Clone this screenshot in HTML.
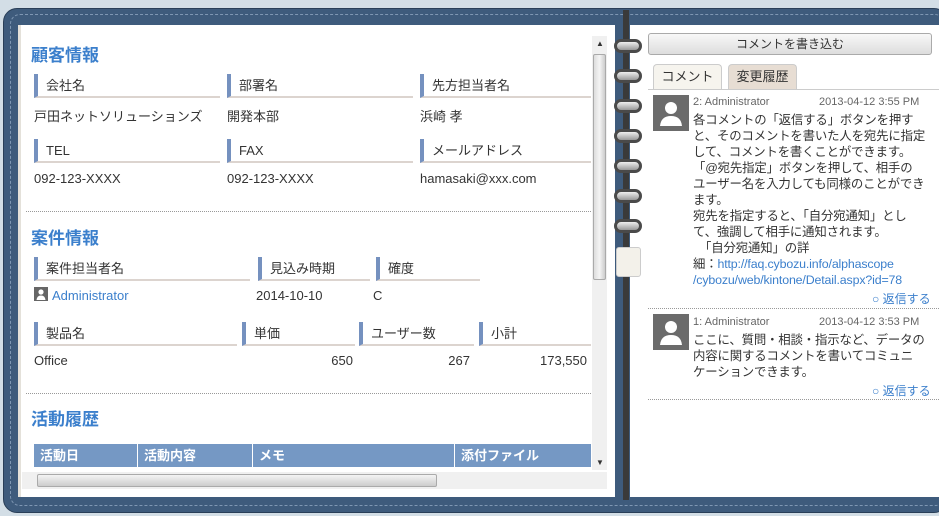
<!DOCTYPE html><html><head><meta charset="utf-8"><style>
*{margin:0;padding:0;box-sizing:border-box}
body{width:939px;height:516px;background:#d3dee6;position:relative;overflow:hidden;font-family:"Liberation Sans","Noto Sans CJK JP",sans-serif;font-size:13px;color:#333}
.a{position:absolute}
.binder{left:3px;top:8px;width:945px;height:505px;background:#3e5b7c;border-radius:14px;border:1px solid #2a3f58}
.stitch{left:10px;top:14px;width:935px;height:492px;border:1px dashed #7f97b3;border-radius:10px}
.lp{left:18px;top:25px;width:597px;height:472px;background:#fff;border-left:3px solid #e4e1da}
.rp{left:630px;top:25px;width:309px;height:472px;background:#fff}
.spine{left:623px;top:10px;width:6px;height:490px;background:#3a3a3a}
.h{color:#3b7fcc;font-weight:bold;font-size:17px}
.lb{height:24px;border-left:4px solid #7591bf;border-bottom:2px solid #dcd4cf;padding-left:8px;line-height:24px;font-size:13px}
.dot{border-top:1px dotted #999;height:0}
.th{background:#7598c4;color:#fff;font-weight:bold;height:23px;line-height:23px;padding-left:6px;border-right:1px solid #fff;top:444px}
.ring{left:614px;width:28px;height:14px;border:3px solid #4a4a4a;border-radius:7px;background:linear-gradient(#eee,#999)}
.lk{color:#3b7fcc}
.ct{white-space:nowrap;line-height:16px;font-size:12.4px;letter-spacing:-0.15px}
</style></head><body>
<div class="a binder"></div><div class="a stitch"></div>
<div class="a lp"></div><div class="a rp"></div>
<div class="a spine"></div>
<div class="a h" style="left:31px;top:41px">顧客情報</div>
<div class="a lb" style="left:34px;top:74px;width:186px">会社名</div>
<div class="a lb" style="left:227px;top:74px;width:186px">部署名</div>
<div class="a lb" style="left:420px;top:74px;width:171px">先方担当者名</div>
<div class="a" style="left:34px;top:106px">戸田ネットソリューションズ</div>
<div class="a" style="left:227px;top:106px">開発本部</div>
<div class="a" style="left:420px;top:106px">浜崎 孝</div>
<div class="a lb" style="left:34px;top:139px;width:186px">TEL</div>
<div class="a lb" style="left:227px;top:139px;width:186px">FAX</div>
<div class="a lb" style="left:420px;top:139px;width:171px">メールアドレス</div>
<div class="a" style="left:34px;top:171px">092-123-XXXX</div>
<div class="a" style="left:227px;top:171px">092-123-XXXX</div>
<div class="a" style="left:420px;top:171px">hamasaki@xxx.com</div>
<div class="a dot" style="left:26px;top:211px;width:565px"></div>
<div class="a h" style="left:31px;top:224px">案件情報</div>
<div class="a lb" style="left:34px;top:257px;width:216px">案件担当者名</div>
<div class="a lb" style="left:258px;top:257px;width:112px">見込み時期</div>
<div class="a lb" style="left:376px;top:257px;width:104px">確度</div>
<div class="a" style="left:34px;top:287px;width:14px;height:14px;background:#666"><svg width="14" height="14"><circle cx="7" cy="5" r="2.6" fill="#fff"/><path d="M2.5 13 Q3 8.5 7 8.5 Q11 8.5 11.5 13Z" fill="#fff"/></svg></div>
<div class="a lk" style="left:52px;top:288px">Administrator</div>
<div class="a" style="left:256px;top:288px">2014-10-10</div>
<div class="a" style="left:373px;top:288px">C</div>
<div class="a lb" style="left:34px;top:322px;width:203px">製品名</div>
<div class="a lb" style="left:242px;top:322px;width:113px">単価</div>
<div class="a lb" style="left:359px;top:322px;width:115px">ユーザー数</div>
<div class="a lb" style="left:479px;top:322px;width:112px">小計</div>
<div class="a" style="left:34px;top:353px">Office</div>
<div class="a" style="left:242px;top:353px;width:111px;text-align:right">650</div>
<div class="a" style="left:359px;top:353px;width:111px;text-align:right">267</div>
<div class="a" style="left:479px;top:353px;width:108px;text-align:right">173,550</div>
<div class="a dot" style="left:26px;top:393px;width:565px"></div>
<div class="a h" style="left:31px;top:405px">活動履歴</div>
<div class="a th" style="left:34px;width:104px">活動日</div>
<div class="a th" style="left:138px;width:115px">活動内容</div>
<div class="a th" style="left:253px;width:202px">メモ</div>
<div class="a th" style="left:455px;width:136px;border-right:0">添付ファイル</div>
<div class="a" style="left:592px;top:36px;width:15px;height:434px;background:#f0f0f0"></div>
<div class="a" style="left:593px;top:54px;width:13px;height:226px;background:linear-gradient(90deg,#ddd,#f4f4f4,#ccc);border:1px solid #aaa;border-radius:2px"></div>
<div class="a" style="left:596px;top:39px;font-size:8px">▲</div>
<div class="a" style="left:596px;top:458px;font-size:8px">▼</div>
<div class="a" style="left:22px;top:472px;width:585px;height:17px;background:#f0f0f0"></div>
<div class="a" style="left:37px;top:474px;width:400px;height:13px;background:linear-gradient(#f4f4f4,#ccc);border:1px solid #aaa;border-radius:2px"></div>
<div class="a ring" style="top:39px"></div><div class="a ring" style="top:69px"></div><div class="a ring" style="top:99px"></div><div class="a ring" style="top:129px"></div><div class="a ring" style="top:159px"></div><div class="a ring" style="top:189px"></div><div class="a ring" style="top:219px"></div>
<div class="a" style="left:616px;top:247px;width:25px;height:30px;background:#f3f1ea;border:1px solid #ccc;border-radius:3px"></div>
<div class="a" style="left:648px;top:33px;width:284px;height:22px;background:linear-gradient(#f8f8f8,#ddd);border:1px solid #aaa;border-radius:3px;text-align:center;line-height:20px;font-size:12px">コメントを書き込む</div>
<div class="a" style="left:653px;top:64px;width:69px;height:26px;background:#f6f4ee;border:1px solid #ccc;border-bottom:0;border-radius:4px 4px 0 0;text-align:center;line-height:24px">コメント</div>
<div class="a" style="left:728px;top:64px;width:69px;height:26px;background:#e7ddd3;border:1px solid #ccc;border-bottom:0;border-radius:4px 4px 0 0;text-align:center;line-height:24px">変更履歴</div>
<div class="a" style="left:648px;top:89px;width:291px;border-top:1px solid #ccc"></div>
<div class="a" style="left:653px;top:95px;width:36px;height:36px;background:#6b6b6b"><svg width="36" height="36"><circle cx="18" cy="13" r="6" fill="#fff"/><path d="M7 31 Q8 21 18 21 Q28 21 29 31Z" fill="#fff"/></svg></div>
<div class="a" style="left:693px;top:96px;font-size:11px;color:#666">2: Administrator</div>
<div class="a" style="left:819px;top:96px;font-size:11px;color:#666">2013-04-12 3:55 PM</div>
<div class="a ct" style="left:693px;top:112px">各コメントの「返信する」ボタンを押す<br>と、そのコメントを書いた人を宛先に指定<br>して、コメントを書くことができます。<br>「@宛先指定」ボタンを押して、相手の<br>ユーザー名を入力しても同様のことができ<br>ます。<br>宛先を指定すると、「自分宛通知」とし<br>て、強調して相手に通知されます。<br>　「自分宛通知」の詳<br>細：<span class="lk">http://faq.cybozu.info/alphascope<br>/cybozu/web/kintone/Detail.aspx?id=78</span></div>
<div class="a lk" style="left:872px;top:290px;font-size:12px">○ 返信する</div>
<div class="a dot" style="left:648px;top:308px;width:291px"></div>
<div class="a" style="left:653px;top:314px;width:36px;height:36px;background:#6b6b6b"><svg width="36" height="36"><circle cx="18" cy="13" r="6" fill="#fff"/><path d="M7 31 Q8 21 18 21 Q28 21 29 31Z" fill="#fff"/></svg></div>
<div class="a" style="left:693px;top:316px;font-size:11px;color:#666">1: Administrator</div>
<div class="a" style="left:819px;top:316px;font-size:11px;color:#666">2013-04-12 3:53 PM</div>
<div class="a ct" style="left:693px;top:332px">ここに、質問・相談・指示など、データの<br>内容に関するコメントを書いてコミュニ<br>ケーションできます。</div>
<div class="a lk" style="left:872px;top:382px;font-size:12px">○ 返信する</div>
<div class="a dot" style="left:648px;top:399px;width:291px"></div>
</body></html>
